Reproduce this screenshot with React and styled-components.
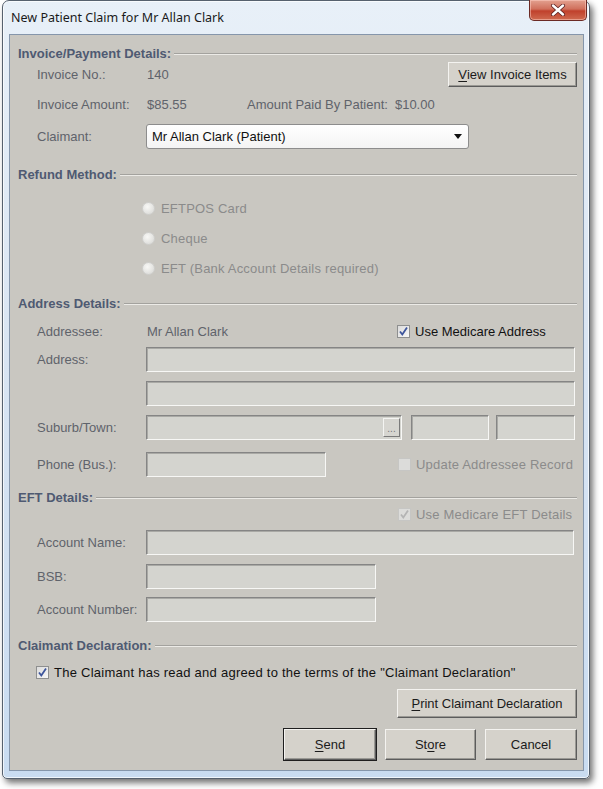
import styled, { createGlobalStyle } from "styled-components";

const Global = createGlobalStyle`
  body {
    margin: 0;
    background: #ffffff;
    font-family: "Liberation Sans", Arial, sans-serif;
  }
`;

export default function App() {
  return (
    <>
      <Global />
      <Page>
        <Window>
          <TitleBar>
            <Title>New Patient Claim for Mr Allan Clark</Title>
            <CloseButton>
              <svg width="16" height="12" viewBox="0 0 16 12">
                <path d="M3 1.5 L13 10.5 M13 1.5 L3 10.5" stroke="#5a2020" strokeWidth="4" strokeLinecap="round" />
                <path d="M3 1.5 L13 10.5 M13 1.5 L3 10.5" stroke="#ffffff" strokeWidth="2.4" strokeLinecap="round" />
              </svg>
            </CloseButton>
          </TitleBar>
          <Panel>
            <Heading>Invoice/Payment Details:</Heading>
            <Row height={25}>
              <Label>Invoice No.:</Label>
              <Value>140</Value>
              <Spacer />
              <Button width={129} height={25}>
                <u>V</u>iew Invoice Items
              </Button>
            </Row>
            <Row height={25} top={5}>
              <Label>Invoice Amount:</Label>
              <Value width={99}>$85.55</Value>
              <Value right={6}>Amount Paid By Patient:</Value>
              <Value>$10.00</Value>
            </Row>
            <Row height={25} top={7}>
              <Label>Claimant:</Label>
              <Select>
                <span>Mr Allan Clark (Patient)</span>
                <Arrow />
              </Select>
            </Row>

            <Heading top={16}>Refund Method:</Heading>
            <RadioList>
              {["EFTPOS Card", "Cheque", "EFT (Bank Account Details required)"].map((t) => (
                <RadioRow key={t}>
                  <Radio />
                  <DisabledText>{t}</DisabledText>
                </RadioRow>
              ))}
            </RadioList>

            <Heading top={11}>Address Details:</Heading>
            <Row height={25} top={7}>
              <Label>Addressee:</Label>
              <Value width={250}>Mr Allan Clark</Value>
              <Check checked />
              <CheckText>Use Medicare Address</CheckText>
            </Row>
            <Row height={25} top={3}>
              <Label>Address:</Label>
              <Field width={429} />
            </Row>
            <Row height={25} top={9}>
              <Label />
              <Field width={429} />
            </Row>
            <Row height={25} top={9}>
              <Label>Suburb/Town:</Label>
              <Field width={256}>
                <DotsButton>...</DotsButton>
              </Field>
              <Field width={78} left={9} />
              <Field width={79} left={7} />
            </Row>
            <Row height={25} top={12}>
              <Label>Phone (Bus.):</Label>
              <Field width={180} />
              <Gap width={72} />
              <Check disabled />
              <DisabledText>Update Addressee Record</DisabledText>
            </Row>

            <Heading top={11}>EFT Details:</Heading>
            <Row height={17}>
              <Gap width={361} />
              <Check checked disabled />
              <DisabledText>Use Medicare EFT Details</DisabledText>
            </Row>
            <Row height={25} top={7}>
              <Label>Account Name:</Label>
              <Field width={428} />
            </Row>
            <Row height={25} top={9}>
              <Label>BSB:</Label>
              <Field width={230} />
            </Row>
            <Row height={25} top={8}>
              <Label>Account Number:</Label>
              <Field width={230} />
            </Row>

            <Heading top={14}>Claimant Declaration:</Heading>
            <DeclRow>
              <Check checked />
              <CheckText wide>
                The Claimant has read and agreed to the terms of the "Claimant Declaration"
              </CheckText>
            </DeclRow>
            <ButtonRow top={7}>
              <Button width={180} height={29}>
                <u>P</u>rint Claimant Declaration
              </Button>
            </ButtonRow>
            <ButtonRow top={11} gap={9}>
              <Button width={92} height={31} primary>
                <u>S</u>end
              </Button>
              <Button width={91} height={31}>
                St<u>o</u>re
              </Button>
              <Button width={92} height={31}>
                Cancel
              </Button>
            </ButtonRow>
          </Panel>
        </Window>
      </Page>
    </>
  );
}

function Check({ checked, disabled }) {
  return (
    <CheckBox disabled={disabled}>
      {checked && (
        <svg width="11" height="11" viewBox="0 0 11 11">
          <path
            d="M2 5.5 L4.3 8.5 L9 1.5"
            fill="none"
            stroke={disabled ? "#b4b4b4" : "#3d559c"}
            strokeWidth="1.8"
          />
        </svg>
      )}
    </CheckBox>
  );
}

const Page = styled.div`
  width: 603px;
  height: 789px;
  padding: 0 0 0 2px;
  box-sizing: border-box;
`;

const Window = styled.div`
  width: 588px;
  height: 779px;
  box-sizing: border-box;
  border: 1px solid #56616e;
  border-radius: 7px 7px 5px 5px;
  background: linear-gradient(180deg, #e8f0f8 0%, #dbe6f3 40%, #c9dcf1 100%);
  box-shadow: 3px 4px 6px rgba(0, 0, 0, 0.55), inset 0 0 0 1px rgba(255, 255, 255, 0.7);
  display: flex;
  flex-direction: column;
`;

const TitleBar = styled.div`
  height: 33px;
  display: flex;
  align-items: flex-start;
  justify-content: space-between;
  padding: 0 2px 0 8px;
`;

const Title = styled.div`
  font-family: "Noto Sans", "Liberation Sans", sans-serif;
  font-size: 12.5px;
  color: #1a1a1a;
  padding-top: 8px;
`;

const CloseButton = styled.div`
  width: 58px;
  height: 21px;
  margin-top: -1px;
  box-sizing: border-box;
  border: 1px solid #6b2a24;
  border-top: none;
  border-radius: 0 0 5px 5px;
  background: linear-gradient(180deg, #e3a190 0%, #d0705c 45%, #c0412c 55%, #cf6a50 100%);
  box-shadow: inset 0 0 0 1px rgba(255, 210, 200, 0.5);
  display: flex;
  align-items: center;
  justify-content: center;
`;

const Panel = styled.div`
  flex: 1;
  margin: 0 5px 7px 6px;
  border: 1px solid #8596ab;
  background: #c9c7c1;
  padding: 9px 6px 0 8px;
  display: flex;
  flex-direction: column;
`;

const Heading = styled.div`
  height: 18px;
  margin-top: ${(p) => p.top || 0}px;
  display: flex;
  align-items: center;
  gap: 3px;
  font-weight: 700;
  font-size: 13px;
  color: #4f5a72;
  &::after {
    content: "";
    flex: 1;
    height: 0;
    border-top: 1px solid #a3a29e;
    border-bottom: 1px solid #ecebe7;
    margin-top: 1px;
  }
`;

const Row = styled.div`
  height: ${(p) => p.height}px;
  margin-top: ${(p) => p.top || 0}px;
  padding-left: 19px;
  display: flex;
  align-items: center;
  font-size: 13px;
`;

const Label = styled.div`
  width: 109px;
  flex-shrink: 0;
  color: #5f636b;
`;

const Value = styled.div`
  width: ${(p) => (p.width ? p.width + "px" : "auto")};
  margin-right: ${(p) => p.right || 0}px;
  flex-shrink: 0;
  color: #5f636b;
  padding-left: 1px;
`;

const Spacer = styled.div`
  flex: 1;
`;

const Gap = styled.div`
  width: ${(p) => p.width}px;
  flex-shrink: 0;
`;

const Button = styled.div`
  width: ${(p) => p.width}px;
  height: ${(p) => p.height}px;
  box-sizing: border-box;
  display: flex;
  align-items: center;
  justify-content: center;
  font-size: 13px;
  color: #1b1b1b;
  background: #d5d2cb;
  border: 1px solid;
  border-color: #f4f3f0 #5c5c5c #5c5c5c #f4f3f0;
  box-shadow: ${(p) =>
    p.primary
      ? "0 0 0 1px #1e1e1e, inset -1px -1px 0 #9a9994"
      : "inset -1px -1px 0 #9a9994"};
  u {
    text-underline-offset: 2px;
  }
`;

const Select = styled.div`
  width: 323px;
  height: 25px;
  box-sizing: border-box;
  border: 1px solid #8d8d8d;
  border-radius: 3px;
  background: linear-gradient(180deg, #ffffff 0%, #f4f4f4 100%);
  display: flex;
  align-items: center;
  justify-content: space-between;
  padding: 0 6px 0 5px;
  font-size: 13px;
  color: #111;
`;

const Arrow = styled.div`
  width: 0;
  height: 0;
  border-left: 4px solid transparent;
  border-right: 4px solid transparent;
  border-top: 5px solid #111;
`;

const RadioList = styled.div`
  margin-top: 10px;
  display: flex;
  flex-direction: column;
`;

const RadioRow = styled.div`
  height: 30px;
  padding-left: 124px;
  display: flex;
  align-items: center;
  gap: 6px;
  font-size: 13px;
`;

const Radio = styled.div`
  width: 11px;
  height: 11px;
  border-radius: 50%;
  border: 1px solid #d0d0ce;
  background: radial-gradient(circle at 40% 35%, #f8f8f6 0%, #e0e0dd 70%, #d0d0cd 100%);
`;

const DisabledText = styled.div`
  color: #8b8b8b;
  font-size: 13px;
  letter-spacing: 0.2px;
`;

const CheckBox = styled.div`
  width: 13px;
  height: 13px;
  box-sizing: border-box;
  flex-shrink: 0;
  border: 1px solid ${(p) => (p.disabled ? "#c6c6c4" : "#8e8f8f")};
  background: ${(p) =>
    p.disabled ? "#dcdcda" : "linear-gradient(135deg, #dcdcdc 0%, #f7f7f7 100%)"};
  display: flex;
  align-items: center;
  justify-content: center;
  margin-right: 5px;
`;

const CheckText = styled.div`
  color: #111;
  font-size: 13px;
  letter-spacing: ${(p) => (p.wide ? "0.25px" : "0")};
`;

const Field = styled.div`
  width: ${(p) => p.width}px;
  height: 25px;
  margin-left: ${(p) => p.left || 0}px;
  box-sizing: border-box;
  flex-shrink: 0;
  background: #d4d4cf;
  border: 1px solid;
  border-color: #858585 #f7f7f5 #f7f7f5 #858585;
  box-shadow: inset 1px 1px 0 #a9a9a5;
  display: flex;
  align-items: center;
  justify-content: flex-end;
  padding-right: 1px;
`;

const DotsButton = styled.div`
  width: 17px;
  height: 19px;
  box-sizing: border-box;
  background: #d6d5d0;
  border: 1px solid;
  border-color: #f4f4f2 #7a7a7a #7a7a7a #f4f4f2;
  font-size: 10px;
  color: #777;
  display: flex;
  align-items: flex-end;
  justify-content: center;
  line-height: 14px;
`;

const DeclRow = styled.div`
  height: 20px;
  margin-top: 8px;
  padding-left: 18px;
  display: flex;
  align-items: center;
`;

const ButtonRow = styled.div`
  margin-top: ${(p) => p.top}px;
  display: flex;
  justify-content: flex-end;
  gap: ${(p) => p.gap || 0}px;
`;
